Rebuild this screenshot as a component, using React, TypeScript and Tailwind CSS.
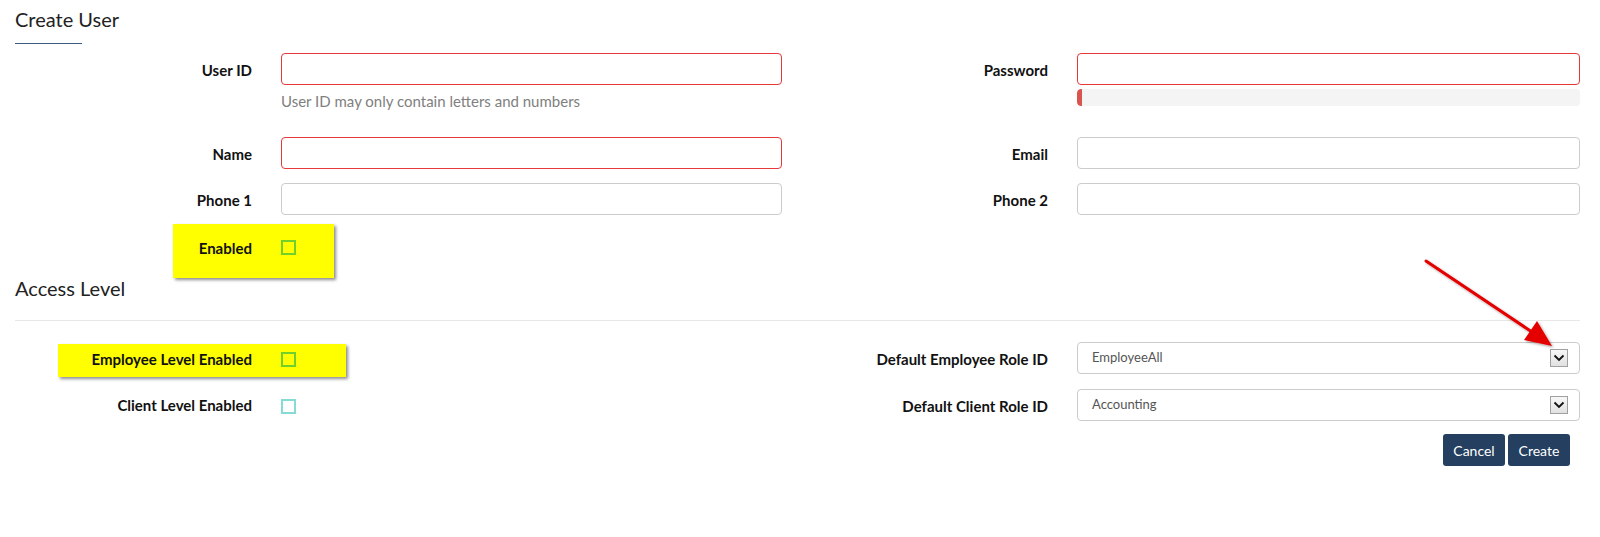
import React from "react";

const Label = ({ children }: { children: React.ReactNode }) => (
  <div className="flex items-center justify-end pt-[3px] text-[15px] font-bold text-[#111] leading-none">{children}</div>
);

const TextInput = ({ invalid }: { invalid?: boolean }) => (
  <div
    className={
      "h-[32px] rounded-[4px] border bg-white " +
      (invalid ? "border-[#e5383b]" : "border-[#cccccc]")
    }
  />
);

const Check = ({ onYellow }: { onYellow?: boolean }) => (
  <div
    className={
      "w-[15px] h-[15px] border-2 bg-transparent " +
      (onYellow ? "border-[#6fd12a]" : "border-[#86dcd4]")
    }
  />
);

const SelectBox = ({ value }: { value: string }) => (
  <div className="h-[32px] rounded-[4px] border border-[#cccccc] bg-white flex items-center justify-between pl-[14px] pr-[11px]">
    <span className="text-[13px] text-[#555555]">{value}</span>
    <div className="w-[18px] h-[18px] border border-[#a0a0a0] bg-gradient-to-b from-[#f7f7f7] to-[#e1e1e1] flex items-center justify-center">
      <svg width="12" height="8" viewBox="0 0 12 8">
        <path d="M1.5 1.5 L6 6 L10.5 1.5" fill="none" stroke="#111" strokeWidth="1.8" />
      </svg>
    </div>
  </div>
);

export default function App() {
  return (
    <div className="relative w-[1600px] h-[537px] bg-white px-[15px] font-['Lato',sans-serif] text-[#222] overflow-hidden">
      {/* Title */}
      <div className="h-[38px] flex items-center text-[20px] text-[#222]">Create User</div>
      <div className="mt-[5px] w-[67px] h-px bg-[#3d5a80]" />

      {/* Top form grid */}
      <div className="mt-[9px] grid grid-cols-[237px_501px_237px_503px] gap-x-[29px]">
        {/* Row 1 */}
        <Label>User ID</Label>
        <TextInput invalid />
        <Label>Password</Label>
        <TextInput invalid />

        {/* Row 2 */}
        <div className="h-[52px]" />
        <div className="pt-[6px] text-[15px] leading-[20px] text-[#808080]">User ID may only contain letters and numbers</div>
        <div />
        <div className="pt-[4px]">
          <div className="h-[17px] rounded-[4px] bg-[#f4f4f4] overflow-hidden">
            <div className="h-full w-[5px] bg-[#d9534f] rounded-l-[4px]" />
          </div>
        </div>

        {/* Row 3 */}
        <Label>Name</Label>
        <TextInput invalid />
        <Label>Email</Label>
        <TextInput />

        {/* Row 4 */}
        <div className="col-span-4 h-[14px]" />
        <Label>Phone 1</Label>
        <TextInput />
        <Label>Phone 2</Label>
        <TextInput />

        {/* Row 5 */}
        <div className="col-span-4 h-[9px]" />
        <div className="col-span-2 relative h-[54px] grid grid-cols-[237px_501px] gap-x-[29px]">
          <div className="absolute left-[158px] top-0 w-[161px] h-[54px] bg-[#ffff00] shadow-[2px_2px_3px_rgba(0,0,0,0.45)]" />
          <div className="relative flex items-center justify-end pb-[5px] text-[15px] font-bold text-[#111]">Enabled</div>
          <div className="relative flex items-center pb-[7px]">
            <Check onYellow />
          </div>
        </div>
      </div>

      {/* Access Level */}
      <div className="h-[20px] flex items-center text-[20px] text-[#222]">Access Level</div>
      <div className="mt-[22px] border-t border-[#e8e8e8] w-[1565px]" />

      <div className="mt-[21px] grid grid-cols-[237px_501px_237px_503px] gap-x-[29px]">
        <div className="col-span-2 relative h-[32px] grid grid-cols-[237px_501px] gap-x-[29px]">
          <div className="absolute left-[43px] top-[2px] w-[288px] h-[33px] bg-[#ffff00] shadow-[2px_2px_3px_rgba(0,0,0,0.45)]" />
          <div className="relative flex items-center justify-end pt-[2px] text-[15px] font-bold text-[#111]">Employee Level Enabled</div>
          <div className="relative flex items-center pt-[2px]">
            <Check onYellow />
          </div>
        </div>
        <Label>Default Employee Role ID</Label>
        <SelectBox value="EmployeeAll" />

        <div className="col-span-4 h-[15px]" />

        <div className="h-[32px] flex items-center justify-end pt-[1px] text-[15px] font-bold text-[#111]">Client Level Enabled</div>
        <div className="flex items-center pt-[2px]">
          <Check />
        </div>
        <Label>Default Client Role ID</Label>
        <SelectBox value="Accounting" />
      </div>

      {/* Buttons */}
      <div className="mt-[13px] w-[1555px] flex justify-end gap-[3px]">
        <button className="h-[32px] w-[62px] rounded-[3px] bg-[#243f5f] text-white text-[14px]">Cancel</button>
        <button className="h-[32px] w-[62px] rounded-[3px] bg-[#243f5f] text-white text-[14px]">Create</button>
      </div>

      {/* Red annotation arrow */}
      <svg className="absolute left-[1415px] top-[254px] pointer-events-none" width="150" height="105" viewBox="0 0 150 105">
        <defs>
          <filter id="sh" x="-20%" y="-20%" width="140%" height="140%">
            <feDropShadow dx="1.5" dy="1.5" stdDeviation="1.2" floodColor="#000" floodOpacity="0.35" />
          </filter>
        </defs>
        <g filter="url(#sh)">
          <line x1="11" y1="7" x2="120" y2="80" stroke="#e50000" strokeWidth="3" strokeLinecap="round" />
          <polygon points="137,92 109,86 122,67" fill="#e50000" />
        </g>
      </svg>
    </div>
  );
}
